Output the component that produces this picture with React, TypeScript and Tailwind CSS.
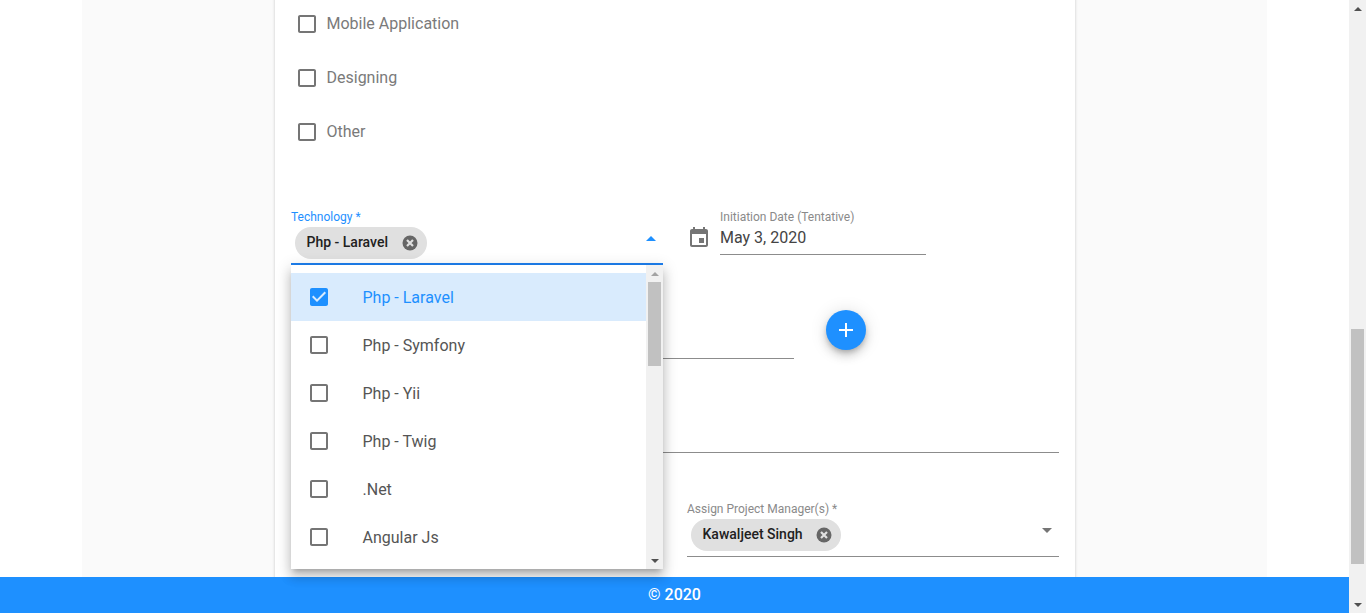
import React from "react";

const BOX = "M19 5v14H5V5h14m0-2H5c-1.1 0-2 .9-2 2v14c0 1.1.9 2 2 2h14c1.1 0 2-.9 2-2V5c0-1.1-.9-2-2-2z";
const CHECKED = "M19 3H5c-1.11 0-2 .9-2 2v14c0 1.1.89 2 2 2h14c1.11 0 2-.9 2-2V5c0-1.1-.89-2-2-2zm-9 14l-5-5 1.41-1.41L10 14.17l7.59-7.59L19 8l-9 9z";
const EVENT = "M17 12h-5v5h5v-5zM16 1v2H8V1H6v2H5c-1.11 0-1.99.9-1.99 2L3 19c0 1.1.89 2 2 2h14c1.1 0 2-.9 2-2V5c0-1.1-.9-2-2-2h-1V1h-2zm3 18H5V8h14v11z";
const ADD = "M19 13h-6v6h-2v-6H5v-2h6V5h2v6h6v2z";

function Icon({ d, className }: { d: string; className?: string }) {
  return (
    <svg viewBox="0 0 24 24" fill="currentColor" className={className}>
      <path d={d} />
    </svg>
  );
}

function CancelIcon() {
  return (
    <svg viewBox="0 0 18 18" className="h-[18px] w-[18px]">
      <circle cx="9" cy="9" r="7.5" fill="#666666" />
      <path d="M6 6 L12 12 M12 6 L6 12" stroke="#e0e0e0" strokeWidth="2.2" fill="none" />
    </svg>
  );
}

function Chip({ label, width }: { label: string; width: string }) {
  return (
    <div className={`flex h-8 items-center justify-between rounded-2xl bg-[#e0e0e0] pl-[11.5px] pr-2 text-sm font-medium text-[#212121] ${width}`}>
      <span className="pb-[2px]">{label}</span>
      <CancelIcon />
    </div>
  );
}

function Caret({ up, className }: { up?: boolean; className?: string }) {
  return (
    <svg viewBox="0 0 10 5" fill="currentColor" className={className}>
      <path d={up ? "M0 5 L5 0 L10 5z" : "M0 0 L5 5 L10 0z"} />
    </svg>
  );
}

const items = ["Php - Laravel", "Php - Symfony", "Php - Yii", "Php - Twig", ".Net", "Angular Js"];

function Dropdown() {
  return (
    <div className="absolute left-0 right-0 top-full z-20 flex h-[304px] bg-white shadow-[0_5px_5px_-3px_rgba(0,0,0,0.2),0_8px_10px_1px_rgba(0,0,0,0.14),0_3px_14px_2px_rgba(0,0,0,0.12)]">
      <div className="flex-1 pt-2">
        {items.map((it, i) => (
          <div key={it} className={`flex h-12 items-center pl-[15.5px] ${i === 0 ? "bg-[#d9ebfd] text-[#1e90ff]" : "text-[#555555]"}`}>
            <Icon d={i === 0 ? CHECKED : BOX} className={`h-6 w-6 ${i === 0 ? "text-[#1e90ff]" : "text-[#757575]"}`} />
            <span className="ml-[32px] pt-[2px] text-base">{it}</span>
          </div>
        ))}
      </div>
      <div className="flex w-[17px] flex-col bg-[#f1f1f1]">
        <div className="flex h-[17px] items-center justify-center">
          <Caret up className="h-1 w-2 text-[#a3a3a3]" />
        </div>
        <div className="mx-[2px] h-[84px] bg-[#c1c1c1]" />
        <div className="flex-1" />
        <div className="flex h-[17px] items-center justify-center">
          <Caret className="h-1 w-2 text-[#505050]" />
        </div>
      </div>
    </div>
  );
}

function PageScrollbar() {
  return (
    <div className="flex h-[613px] w-[17px] shrink-0 flex-col bg-[#f1f1f1]">
      <div className="flex h-[17px] items-center justify-center">
        <Caret up className="h-1 w-2 text-[#505050]" />
      </div>
      <div className="h-[312px]" />
      <div className="mx-[2px] h-[235px] bg-[#c1c1c1]" />
      <div className="flex-1" />
      <div className="flex h-[17px] items-center justify-center">
        <Caret className="h-1 w-2 text-[#505050]" />
      </div>
    </div>
  );
}

export default function App() {
  return (
    <div className="flex h-[613px] overflow-hidden bg-white font-['Roboto',sans-serif]">
      <div className="flex min-w-0 flex-1 flex-col">
        <div className="h-[577px] px-[82px]">
          <div className="flex h-full flex-col bg-[#fafafa] pl-[193px] pr-[192px]">
            <div className="-mt-[3px] h-[600px] shrink-0 bg-white px-4 shadow-[0_0_3px_rgba(0,0,0,0.2)]">
              <div className="h-[212px]">
                {["Mobile Application", "Designing", "Other"].map((t) => (
                  <div key={t} className="flex h-[54px] items-center text-base text-[#7a7a7a]">
                    <Icon d={BOX} className="ml-[3.5px] h-6 w-6 text-[#757575]" />
                    <span className="ml-[8px]">{t}</span>
                  </div>
                ))}
              </div>

              <div className="flex h-[56px]">
                <div className="relative w-[372px]">
                  <div className="h-[18px] pt-px text-xs leading-[14px] text-[#1e90ff]">Technology *</div>
                  <div className="flex h-[38px] items-start justify-between border-b-2 border-[#1e80f0] pl-1 pr-[7px]">
                    <Chip label="Php - Laravel" width="w-[132px]" />
                    <Caret up className="mt-[9px] h-[5px] w-[10px] text-[#1e90ff]" />
                  </div>
                  <Dropdown />
                </div>
                <div className="ml-6 flex">
                  <Icon d={EVENT} className="mt-[17px] h-6 w-6 text-[#757575]" />
                  <div className="ml-[9px] h-[46px] w-[206px] border-b border-[#8c8c8c] pt-px">
                    <div className="h-[14px] text-xs leading-[14px] text-[#8a8a8a]">Initiation Date (Tentative)</div>
                    <div className="mt-[3px] text-base leading-[22px] text-[#444444]">May 3, 2020</div>
                  </div>
                </div>
              </div>

              <div className="flex h-[94px] items-start">
                <div className="mt-[85px] h-[9px] w-[503px] border-b border-[#8c8c8c]" />
                <button className="ml-8 mt-[45px] flex h-10 w-10 items-center justify-center rounded-full bg-[#1e90ff] text-white shadow-[0_3px_5px_-1px_rgba(0,0,0,0.2),0_6px_10px_0_rgba(0,0,0,0.14),0_1px_18px_0_rgba(0,0,0,0.12)]">
                  <Icon d={ADD} className="h-6 w-6" />
                </button>
              </div>

              <div className="h-[94px] border-b border-[#8c8c8c]" />

              <div className="ml-[396px] mt-[49px] h-[55px] w-[372px] border-b border-[#8c8c8c]">
                <div className="h-[17px] text-xs leading-[14px] text-[#8a8a8a]">Assign Project Manager(s) *</div>
                <div className="flex items-start justify-between pl-1 pr-[7px]">
                  <Chip label="Kawaljeet Singh" width="w-[150px]" />
                  <Caret className="mt-[9px] h-[5px] w-[10px] text-[#757575]" />
                </div>
              </div>
            </div>
          </div>
        </div>
        <footer className="relative z-10 flex h-9 shrink-0 items-center justify-center bg-[#1e90ff] text-base font-medium text-white">© 2020</footer>
      </div>
      <PageScrollbar />
    </div>
  );
}
